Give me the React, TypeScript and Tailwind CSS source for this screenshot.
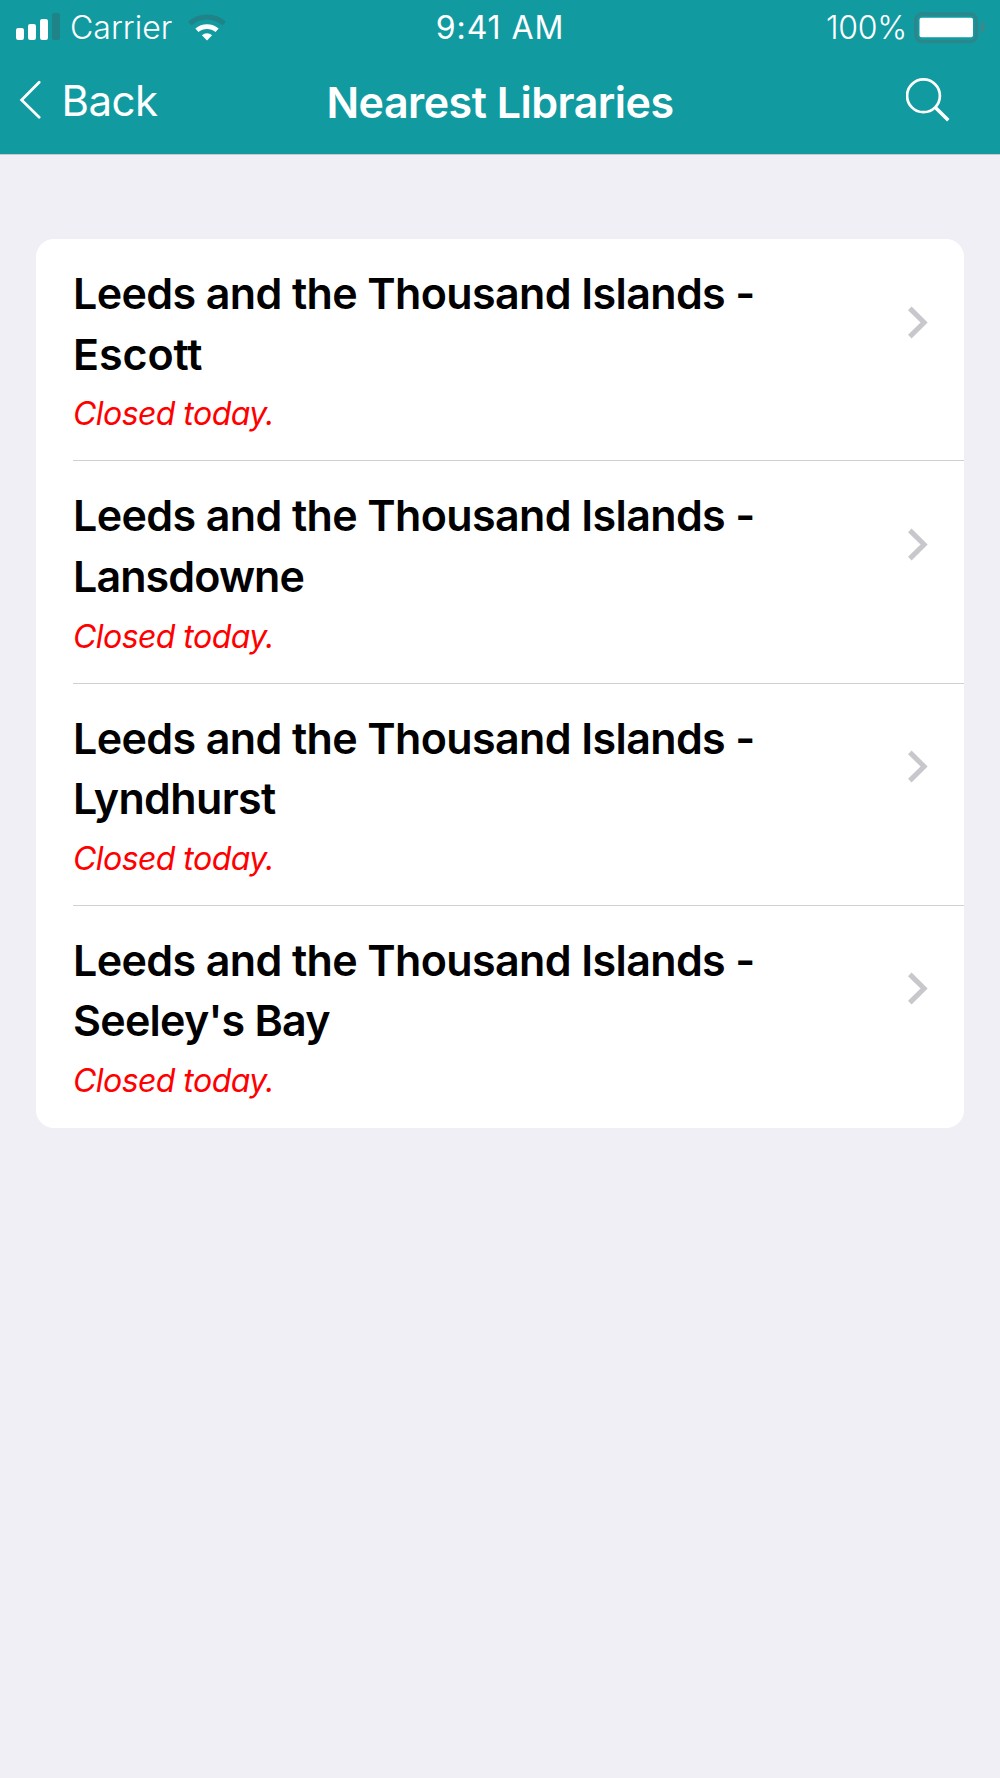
import React from "react";

// TYPES
type Library = {
  name: string;
  branch: string;
  tracking: string;
  status: string;
};

const libraries: Library[] = [
  {
    name: "Leeds and the Thousand Islands -",
    branch: "Escott",
    tracking: "tracking-[-0.1px]",
    status: "Closed today.",
  },
  {
    name: "Leeds and the Thousand Islands -",
    branch: "Lansdowne",
    tracking: "tracking-[-0.9px]",
    status: "Closed today.",
  },
  {
    name: "Leeds and the Thousand Islands -",
    branch: "Lyndhurst",
    tracking: "tracking-[-0.64px]",
    status: "Closed today.",
  },
  {
    name: "Leeds and the Thousand Islands -",
    branch: "Seeley's Bay",
    tracking: "tracking-[-0.75px]",
    status: "Closed today.",
  },
];

// ICONS
const SignalIcon = () => (
  <svg width="44" height="28" viewBox="0 0 44 28" fill="#fff">
    <rect x="0" y="15" width="8" height="12" rx="2.2" />
    <rect x="12" y="11" width="8" height="16" rx="2.2" />
    <rect x="24" y="6" width="8" height="21" rx="2.2" />
    <rect x="36" y="0" width="8" height="27" rx="2.2" fill="#1f8388" />
  </svg>
);

const WifiIcon = () => (
  <svg width="38" height="27" viewBox="0 0 38 27" fill="none">
    <path d="M1.8 9.6A25.5 25.5 0 0 1 36.2 9.6" stroke="#1f8388" strokeWidth="5" />
    <path d="M8.9 16.3A15.4 15.4 0 0 1 29.1 16.3" stroke="#fff" strokeWidth="4.8" />
    <path d="M19 26.5L13.9 21.2A7.8 7.8 0 0 1 24.1 21.2Z" fill="#fff" />
  </svg>
);

const BatteryIcon = () => (
  <svg width="72" height="32" viewBox="0 0 72 32">
    <rect x="1.8" y="2" width="60.6" height="27.6" rx="6" fill="none" stroke="#2b878b" strokeWidth="3.4" />
    <rect x="5.5" y="5.7" width="53.5" height="19.6" rx="2" fill="#fff" />
    <path d="M66.8 9C69.6 10 71 12.5 71 15.3S69.6 20.5 66.8 21.5Z" fill="#3b898d" />
  </svg>
);

const BackIcon = () => (
  <svg width="22" height="40" viewBox="0 0 22 40" fill="none" stroke="#fff" strokeWidth="2.7" strokeLinecap="round">
    <path d="M20.2 2.3L2.6 20L20.2 37.3" />
  </svg>
);

const SearchIcon = () => (
  <svg width="44" height="45" viewBox="0 0 44 45" fill="none" stroke="#fff">
    <circle cx="17.5" cy="18.8" r="16.4" strokeWidth="2.7" />
    <path d="M29.4 30.6L42.3 43.2" strokeWidth="3.5" />
  </svg>
);

const ChevronIcon = () => (
  <svg width="20" height="34" viewBox="0 0 20 34" fill="none" stroke="#c7c7cc" strokeWidth="5">
    <path d="M1.8 2.4L16.1 16.5L1.8 30.6" />
  </svg>
);

const StatusBar = () => (
  <div className="flex h-[53px] items-start justify-between text-[32px] leading-[56px] font-light">
    <div className="flex w-[360px] pl-4">
      <div className="pt-[13px]">
        <SignalIcon />
      </div>
      <span className="ml-[10px] tracking-[0.05px]">Carrier</span>
      <div className="ml-4 pt-[13.5px]">
        <WifiIcon />
      </div>
    </div>
    <span className="font-normal tracking-[0.9px]">9:41 AM</span>
    <div className="flex w-[360px] justify-end pr-[14px]">
      <span className="tracking-[-0.3px]">100%</span>
      <div className="ml-[7px] pt-3">
        <BatteryIcon />
      </div>
    </div>
  </div>
);

const NavBar = () => (
  <div className="flex h-[101px] items-start justify-between">
    <button className="flex w-[300px] items-start pl-[18.5px] text-left">
      <div className="pt-[27px]">
        <BackIcon />
      </div>
      <span className="ml-[21px] text-[42px] leading-[96px] tracking-[-0.5px]">Back</span>
    </button>
    <h1 className="text-[43px] leading-[98px] font-semibold tracking-[-0.52px]">Nearest Libraries</h1>
    <button className="flex w-[300px] justify-end pt-[24px] pr-[50px]">
      <SearchIcon />
    </button>
  </div>
);

const LibraryRow = ({ name, branch, tracking, status }: Library) => (
  <li className="group flex h-[222.2px] pl-[37px]">
    <div className="flex flex-1 justify-between border-b border-[#d0d0d2] pt-6 group-last:border-b-0">
      <div>
        <h2 className="text-[43px] leading-[60.6px] font-semibold tracking-[-0.62px] text-black">
          {name}
          <br />
          <span className={tracking}>{branch}</span>
        </h2>
        <p className="text-[32px] leading-[59px] tracking-[-0.55px] text-[#ff0000] italic">{status}</p>
      </div>
      <div className="pt-[42.7px] pr-9">
        <ChevronIcon />
      </div>
    </div>
  </li>
);

const App = () => {
  return (
    <div className="min-h-[1778px] bg-[#f0eff5] font-['Inter',sans-serif]">
      <header className="border-b border-[#c8c8d0] bg-[#119ba1] text-white">
        <StatusBar />
        <NavBar />
      </header>
      <main className="px-9 pt-[84.2px]">
        <ul className="overflow-hidden rounded-[18px] bg-white">
          {libraries.map((library) => (
            <LibraryRow key={library.branch} {...library} />
          ))}
        </ul>
      </main>
    </div>
  );
};

export default App;
